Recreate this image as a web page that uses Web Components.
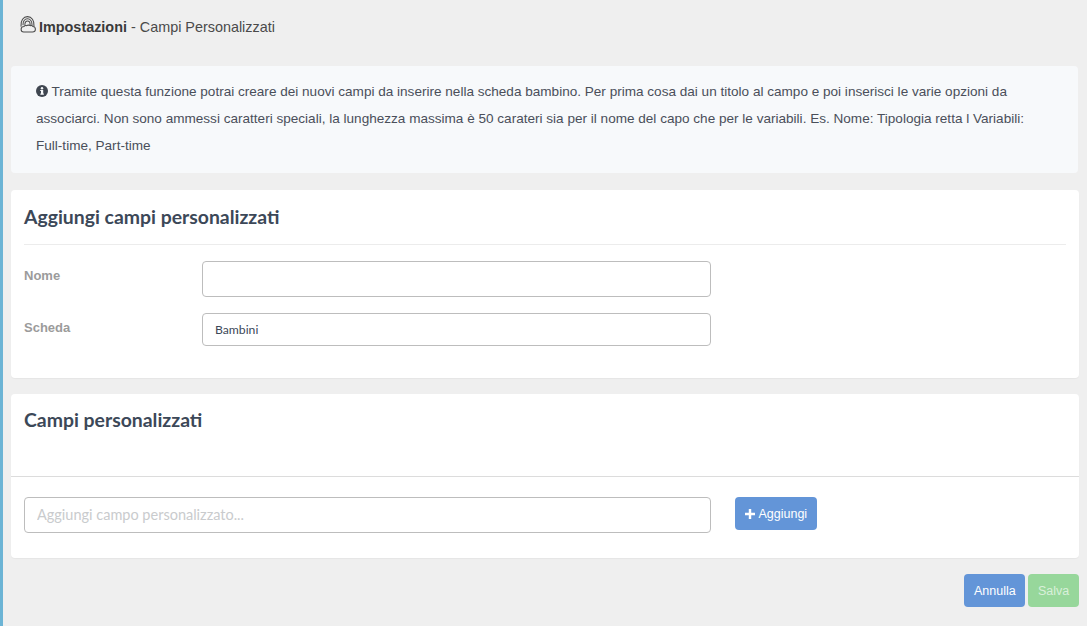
<!DOCTYPE html>
<html lang="it">
<head>
<meta charset="utf-8">
<title>Impostazioni - Campi Personalizzati</title>
<style>
  html, body { margin: 0; height: 100%; }
  body { background: #efefef; overflow: hidden; }
</style>
</head>
<body>
<settings-page>
  <page-title slot="title"><b>Impostazioni</b> - Campi Personalizzati</page-title>
  <info-box slot="info">Tramite questa funzione potrai creare dei nuovi campi da inserire nella scheda bambino. Per prima cosa dai un titolo al campo e poi inserisci le varie opzioni da associarci. Non sono ammessi caratteri speciali, la lunghezza massima è 50 carateri sia per il nome del capo che per le variabili. Es. Nome: Tipologia retta l Variabili: Full-time, Part-time</info-box>
  <form-card slot="cards" class="first" data-title="Aggiungi campi personalizzati">
    <form-row data-label="Nome"><text-field style="height:36px"></text-field></form-row>
    <form-row data-label="Scheda"><text-field style="height:33px" data-value="Bambini"></text-field></form-row>
  </form-card>
  <fields-card slot="cards" data-title="Campi personalizzati"></fields-card>
  <div slot="actions" style="display:flex;gap:3px">
    <app-button data-color="#6395d8">Annulla</app-button>
    <app-button data-color="#97d79b" data-text="#d9f0da">Salva</app-button>
  </div>
</settings-page>

<script>
// Page frame: blue strip on the left, then title, info box, cards and actions
class SettingsPage extends HTMLElement {
  constructor() {
    super();
    const shadow = this.attachShadow({ mode: "open" });
    shadow.innerHTML = `
      <style>
        :host {
          display: block;
          box-sizing: border-box;
          height: 626px;
          border-left: 3px solid #6cb4d5;
          padding: 0 8px 0 8px;
        }
        .cards { display: flex; flex-direction: column; gap: 16px; }
        .actions { display: flex; justify-content: flex-end; margin-top: 16px; }
      </style>
      <slot name="title"></slot>
      <slot name="info"></slot>
      <div class="cards"><slot name="cards"></slot></div>
      <div class="actions"><slot name="actions"></slot></div>
    `;
  }
}
customElements.define("settings-page", SettingsPage);

class PageTitle extends HTMLElement {
  constructor() {
    super();
    const shadow = this.attachShadow({ mode: "open" });
    shadow.innerHTML = `
      <style>
        :host {
          display: flex;
          align-items: center;
          height: 66px;
          padding: 0 0 12px 8px;
          box-sizing: border-box;
          font: 14.4px "Liberation Sans", Arial, sans-serif;
          color: #4a4a4a;
          gap: 3px;
        }
        svg { width: 17px; height: 17px; margin-top: -6px; }
        ::slotted(b) { color: #3a3a3a; }
      </style>
      <svg viewBox="0 0 17 17" fill="none" stroke="#4a4a4a" stroke-width="1.05" stroke-linecap="round">
        <path d="M3.7 16h9.8c1.6 0 2.9-1.2 2.9-2.8 0-1.5-1.1-2.6-2.5-2.7-.5-.9-1.5-1.2-2.4-.8-.7-.8-3.1-.8-4 0-.9-.4-2-.1-2.5.8-1.5 0-2.9 1.1-2.9 2.7 0 1.6 1.1 2.8 2.6 2.8z"/>
        <path d="M2 10.2C1.5 4.5 4.4.6 8.5.6s7 3.9 6.5 9.6"/>
        <path d="M4 8.8C3.8 5.2 5.8 2.8 8.5 2.8s4.7 2.4 4.5 6"/>
        <path d="M5.9 8.4C5.9 6.3 7 5 8.5 5s2.6 1.3 2.6 3.4"/>
      </svg>
      <span><slot></slot></span>
    `;
  }
}
customElements.define("page-title", PageTitle);

class InfoBox extends HTMLElement {
  constructor() {
    super();
    const shadow = this.attachShadow({ mode: "open" });
    shadow.innerHTML = `
      <style>
        :host {
          display: block;
          box-sizing: border-box;
          height: 107px;
          margin: 0 1px 17px 0;
          padding: 12px 25px;
          background: #f7f9fb;
          border-radius: 4px;
          font: 13.57px/27px "Liberation Sans", Arial, sans-serif;
          color: #4a4f5a;
        }
        svg { width: 12px; height: 12px; vertical-align: -1px; }
      </style>
      <svg viewBox="0 0 12 12"><circle cx="6" cy="6" r="6" fill="#3f4650"/><rect x="5" y="5" width="2.2" height="4.4" fill="#f7f9fb"/><rect x="4.2" y="5" width="1.4" height="1" fill="#f7f9fb"/><rect x="4.2" y="8.6" width="3.8" height="1" fill="#f7f9fb"/><circle cx="6" cy="3.2" r="1.2" fill="#f7f9fb"/></svg>
      <slot></slot>
    `;
  }
}
customElements.define("info-box", InfoBox);

const cardCss = `
  :host {
    display: block;
    box-sizing: border-box;
    background: #fff;
    border-radius: 4px;
    box-shadow: 0 1px 1px rgba(0, 0, 0, 0.04);
    font-family: Lato, sans-serif;
  }
  h2 {
    margin: 0;
    font: 700 19.4px/22px Lato, sans-serif;
    color: #3c4858;
  }
`;

class FormCard extends HTMLElement {
  constructor() {
    super();
    const shadow = this.attachShadow({ mode: "open" });
    shadow.innerHTML = `
      <style>
        ${cardCss}
        :host { height: 188px; padding: 16px 13px 0 13px; }
        h2 { padding-bottom: 16px; border-bottom: 1px solid #ececec; }
        .rows { display: flex; flex-direction: column; gap: 16px; margin-top: 16px; }
      </style>
      <h2></h2>
      <div class="rows"><slot></slot></div>
    `;
    shadow.querySelector("h2").textContent = this.dataset.title;
  }
}
customElements.define("form-card", FormCard);

class FormRow extends HTMLElement {
  constructor() {
    super();
    const shadow = this.attachShadow({ mode: "open" });
    shadow.innerHTML = `
      <style>
        :host { display: grid; grid-template-columns: 178px 509px; align-items: start; }
        label {
          font: 700 13px/16px "Liberation Sans", Arial, sans-serif;
          color: #9b9b9b;
          padding-top: 7px;
        }
      </style>
      <label></label>
      <slot></slot>
    `;
    shadow.querySelector("label").textContent = this.dataset.label;
  }
}
customElements.define("form-row", FormRow);

class TextField extends HTMLElement {
  constructor() {
    super();
    const shadow = this.attachShadow({ mode: "open" });
    shadow.innerHTML = `
      <style>
        :host { display: block; }
        input {
          display: block;
          box-sizing: border-box;
          width: 100%;
          height: 100%;
          padding: 0 12px;
          border: 1px solid #bdbdbd;
          border-radius: 4px;
          background: #fff;
          font: 12.2px Lato, sans-serif;
          color: #3c4858;
          outline: none;
        }
        input::placeholder { color: #c9cbcd; opacity: 1; font-size: 14.5px; }
      </style>
      <input type="text">
    `;
    const input = shadow.querySelector("input");
    input.setAttribute("value", this.dataset.value ?? "");
    input.setAttribute("placeholder", this.dataset.placeholder ?? "");
  }
}
customElements.define("text-field", TextField);

class AppButton extends HTMLElement {
  constructor() {
    super();
    const shadow = this.attachShadow({ mode: "open" });
    shadow.innerHTML = `
      <style>
        :host { display: block; }
        button {
          display: flex;
          align-items: center;
          gap: 4px;
          height: 33px;
          padding: 0 9.7px;
          border: 0;
          border-radius: 4px;
          background: var(--bg);
          color: var(--fg);
          font: 12.5px "Liberation Sans", Arial, sans-serif;
        }
        :host([data-icon]) button { padding: 0 9.5px; }
        svg { width: 10px; height: 10px; }
        :host(:not([data-icon])) svg { display: none; }
      </style>
      <button><svg viewBox="0 0 9 9"><path d="M3.4 0h2.2v3.4H9v2.2H5.6V9H3.4V5.6H0V3.4h3.4z" fill="currentColor"/></svg><slot></slot></button>
    `;
    this.style.setProperty("--bg", this.dataset.color ?? "#6395d8");
    this.style.setProperty("--fg", this.dataset.text ?? "#fff");
  }
}
customElements.define("app-button", AppButton);

class FieldsCard extends HTMLElement {
  constructor() {
    super();
    const shadow = this.attachShadow({ mode: "open" });
    shadow.innerHTML = `
      <style>
        ${cardCss}
        :host { height: 164px; padding-top: 15px; }
        h2 { padding: 0 12px 0 13px; height: 67px; border-bottom: 1px solid #dcdcdc; }
        .add { display: flex; align-items: flex-start; gap: 24px; padding: 20px 12px 0 13px; }
        text-field { width: 687px; height: 36px; }
      </style>
      <h2></h2>
      <div class="add">
        <text-field data-placeholder="Aggiungi campo personalizzato..."></text-field>
        <app-button data-icon="plus">Aggiungi</app-button>
      </div>
    `;
    shadow.querySelector("h2").textContent = this.dataset.title;
  }
}
customElements.define("fields-card", FieldsCard);
</script>
</body>
</html>
